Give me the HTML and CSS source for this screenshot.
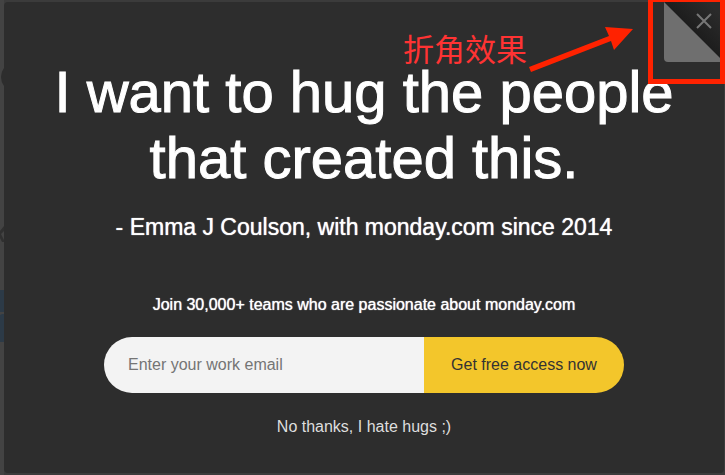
FILE: index.html
```html
<!DOCTYPE html>
<html lang="en">
<head>
<meta charset="utf-8">
<meta name="viewport" content="width=device-width, initial-scale=1">
<title>monday.com</title>
<link rel="stylesheet" href="styles.css">
</head>
<body>
<div class="backdrop" aria-hidden="true">
  <svg class="page-edge" width="4" height="475" viewBox="0 0 4 475">
    <rect width="4" height="475" fill="#434343"/>
    <circle cx="16" cy="77" r="15" fill="#2d2d2d"/>
    <path d="M0 231L4 226V231L1 234L4 240V242H2L0 238Z" fill="#303030"/>
    <path d="M0 290H4V312H0ZM0 315L2 314H4V342H0Z" fill="#2c3a47"/>
  </svg>
</div>
<main class="modal" role="dialog" aria-labelledby="quote">
  <h1 class="quote" id="quote">I want to hug the people<br>that created this.</h1>
  <p class="author">- Emma J Coulson, with monday.com since 2014</p>
  <form class="signup">
    <label class="pitch" for="email">Join 30,000+ teams who are passionate about monday.com</label>
    <div class="field">
      <input class="email" id="email" type="email" placeholder="Enter your work email">
      <button class="submit" type="submit">Get free access now</button>
    </div>
  </form>
  <button class="decline" type="button">No thanks, I hate hugs ;)</button>
  <button class="corner" type="button" aria-label="Close">
    <svg width="60" height="60" viewBox="0 0 60 60">
      <defs>
        <linearGradient id="shade" gradientUnits="userSpaceOnUse" x1="30" y1="30" x2="52" y2="8">
          <stop offset="0" stop-color="#1d1d1d"/>
          <stop offset="1" stop-color="#2b2b2b"/>
        </linearGradient>
      </defs>
      <path d="M0 0H60V60Z" fill="url(#shade)"/>
      <path d="M0 0L60 60H4Q0 60 0 56Z" fill="#6f6f6f"/>
      <path d="M33 12L47 26M47 12L33 26" stroke="#777" stroke-width="2"/>
    </svg>
  </button>
</main>
<div class="note">
  <span class="note-text" lang="zh-CN">折角效果</span>
  <svg class="note-arrow" width="104" height="48" viewBox="0 0 104 48" aria-hidden="true">
    <path d="M0 42L80 11L76 2L104 4L85 25L82 16L2 47Z" fill="#ff2200"/>
  </svg>
  <div class="note-box"></div>
</div>
</body>
</html>
```
FILE: styles.css
```css
* {
  box-sizing: border-box;
}

body {
  margin: 0;
  min-height: 100vh;
  padding: 2px 1px 2px 4px;
  display: grid;
  background: #3b3b3b;
  color: #fff;
  font-family: "Liberation Sans", Arial, sans-serif;
}

button,
input {
  margin: 0;
  padding: 0;
  border: 0;
  background: none;
  color: inherit;
  font: inherit;
}

button {
  cursor: pointer;
}

.backdrop {
  position: absolute;
  top: 0;
  left: 0;
}

.page-edge {
  display: block;
}

.modal {
  position: relative;
  display: flex;
  flex-direction: column;
  align-items: center;
  padding: 57px 24px 32px;
  border-radius: 4px;
  background: #2d2d2d;
  text-align: center;
}

.quote {
  margin: 0;
  font-size: 58px;
  font-weight: 400;
  line-height: 66px;
  white-space: nowrap;
  -webkit-text-stroke: 1px #fff;
}

.author {
  margin: 20px 0 0;
  font-size: 23px;
  line-height: 32px;
  text-shadow: 0 0 1px #fff;
}

.signup {
  width: 100%;
  max-width: 520px;
  margin-top: 50px;
}

.pitch {
  display: block;
  font-size: 16px;
  line-height: 24px;
  text-shadow: 0 0 1px #fff;
}

.field {
  display: flex;
  height: 56px;
  margin-top: 20px;
  overflow: hidden;
  border-radius: 28px;
}

.email {
  flex: 1;
  min-width: 0;
  padding: 0 24px;
  background: #f3f3f3;
  color: #333;
  font-size: 16px;
}

.email::placeholder {
  color: #757575;
}

.submit {
  width: 200px;
  background: #f3c62b;
  color: #333;
  font-size: 16px;
}

.decline {
  margin-top: 22px;
  color: #dedede;
  font-size: 16px;
  line-height: 24px;
}

.corner {
  position: absolute;
  top: 0;
  right: 0;
}

.corner svg {
  display: block;
}

.note {
  position: absolute;
  top: 0;
  right: 0;
  display: flex;
  align-items: flex-start;
  color: #ff3333;
}

.note-text {
  margin: 28px 2px 0 0;
  font-family: "Noto Sans CJK SC", sans-serif;
  font-size: 31px;
  font-weight: 400;
  line-height: 40px;
}

.note-arrow {
  margin: 25px 15px 0 0;
}

.note-box {
  width: 77px;
  height: 84px;
  border: 5px solid #ff2200;
  border-top-width: 2px;
}
```
